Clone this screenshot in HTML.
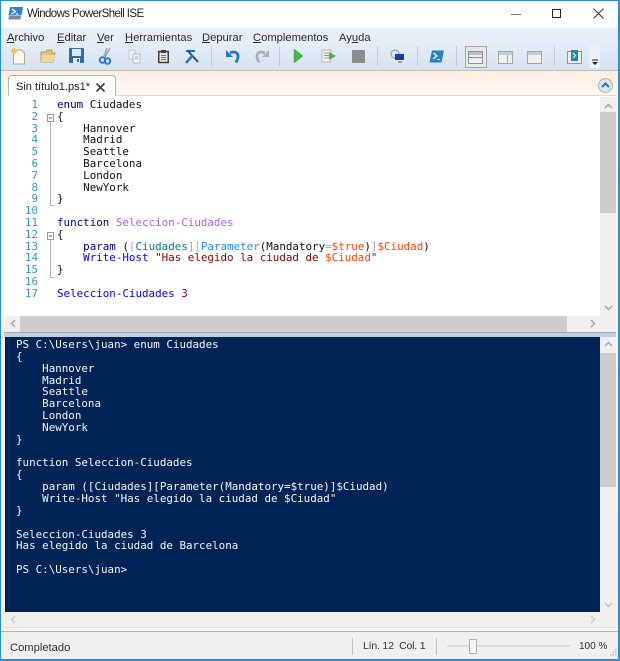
<!DOCTYPE html>
<html><head><meta charset="utf-8">
<style>
html,body{margin:0;padding:0;background:#fff}
#w{position:relative;width:620px;height:661px;overflow:hidden;background:#fff;font-family:"Liberation Sans",sans-serif;color:#222}
.a{position:absolute}
.t{position:absolute;white-space:pre;font-size:11.2px;line-height:14px;color:#2b2b2b}
.t u{text-decoration-thickness:1px;text-underline-offset:1px}
pre{margin:0;position:absolute;font-family:"DejaVu Sans Mono",monospace;font-size:10.86px;line-height:11.85px;white-space:pre}
svg{position:absolute;overflow:visible}
.ln{color:#3a96b8;text-align:right}
.k{color:#00008b}.c{color:#8a2be2;opacity:.75}.v{color:#ff4500}.s{color:#8b0000}.b{color:#0000ff}.o{color:#a9a9a9}.y{color:#008080}.p{color:#1e90ff}.n{color:#800080}
.sep{position:absolute;top:46px;width:1px;height:20px;background:#c3cdd6}
</style></head><body><div id="w">
<div class="a" style="left:0;top:28px;width:620px;height:17px;background:linear-gradient(#e9f0f8,#e5edf6)"></div>
<div class="a" style="left:0;top:45px;width:620px;height:25px;background:linear-gradient(#e4edf7,#d5e3f1)"></div>
<div class="a" style="left:0;top:70px;width:620px;height:1px;background:#c0bdb9"></div>
<div class="a" style="left:0;top:71px;width:620px;height:560px;background:linear-gradient(#fdeedf 0,#fff9f3 24px,#fdf3e8 26px,#fbf0e4 100%)"></div>
<div class="a" style="left:115px;top:95px;width:501px;height:1px;background:#dcd8d4"></div>

<!-- title -->
<svg style="left:8px;top:6px" width="16" height="15" viewBox="0 0 16 15"><path d="M2 1h13l-1.500 8.500H.5z" fill="#2f86c4"/><path d="M1 10h12l-.4 3.500H.4z" fill="#7b8d99"/><path d="M4 3l3.500 2.500L3.500 8" fill="none" stroke="#fff" stroke-width="1.200"/><path d="M7.500 8h3" stroke="#fff"/></svg>
<div class="t" style="left:27px;top:7px;font-size:11.5px;letter-spacing:-.6px;color:#222">Windows PowerShell ISE</div>
<svg style="left:511px;top:13.500px" width="10" height="2"><rect width="10" height="1" y="0" fill="#777"/></svg>
<svg style="left:551px;top:8px" width="11" height="11"><rect x="1.500" y="1.500" width="8" height="8" fill="none" stroke="#222" stroke-width="1"/></svg>
<svg style="left:593px;top:8px" width="11" height="11"><path d="M.5.500l10 10M10.500.500l-10 10" stroke="#333" stroke-width="1" fill="none"/></svg>

<!-- menu -->
<div class="t" style="left:7px;top:31px"><u>A</u>rchivo</div>
<div class="t" style="left:57px;top:31px"><u>E</u>ditar</div>
<div class="t" style="left:97px;top:31px"><u>V</u>er</div>
<div class="t" style="left:125px;top:31px"><u>H</u>erramientas</div>
<div class="t" style="left:202px;top:31px"><u>D</u>epurar</div>
<div class="t" style="left:253px;top:31px"><u>C</u>omplementos</div>
<div class="t" style="left:339px;top:31px">Ay<u>u</u>da</div>

<!-- toolbar -->
<svg style="left:10px;top:47px" width="16" height="18"><path d="M3.500 3h8l3 3v11h-11z" fill="#fbfbf6" stroke="#a9a9a0"/><circle cx="4" cy="4" r="3" fill="#f6c65a"/></svg>
<svg style="left:40px;top:49px" width="16" height="14"><path d="M1 3h5l1-2h5v3h3l-2 9H1z" fill="#e2c378" stroke="#b89a57"/><path d="M2 6h13l-2 7H1z" fill="#f0d89a"/></svg>
<svg style="left:69px;top:48px" width="15" height="16"><rect width="15" height="15" rx="1" fill="#2f6ca8"/><rect x="3" y="1" width="9" height="7" fill="#dfe8f0"/><rect x="4" y="10" width="7" height="5" fill="#e8eef4"/><rect x="8" y="11" width="2" height="3" fill="#2f6ca8"/></svg>
<svg style="left:99px;top:47px" width="12" height="18"><path d="M8 1L5 9M11 1L6 10" stroke="#9aa3ad" stroke-width="1.500" fill="none"/><circle cx="3.500" cy="13" r="2.800" fill="none" stroke="#2f75c8" stroke-width="2"/><circle cx="8.500" cy="14" r="2.800" fill="none" stroke="#2f75c8" stroke-width="2"/></svg>
<svg style="left:128px;top:49px" width="13" height="15"><path d="M1 1h6v9H1z" fill="#eef1f3" stroke="#c3c7cb"/><path d="M5 5h7v9H5z" fill="#f2f4f5" stroke="#b5b9bd"/><path d="M7 8h3M7 10h3" stroke="#aaa"/></svg>
<svg style="left:158px;top:50px" width="11" height="13"><rect x=".75" y="1.500" width="9.500" height="11" fill="#e6e6e2" stroke="#3e3e3e" stroke-width="1.500"/><rect x="3" y="0" width="5" height="3" fill="#3e3e3e"/><path d="M3 5.500h5M3 7.500h5M3 9.500h5" stroke="#777"/></svg>
<svg style="left:185px;top:50px" width="14" height="13"><path d="M1 1h9" stroke="#1d6fb5" stroke-width="2"/><path d="M3 1l10 11" stroke="#34495e" stroke-width="2" fill="none"/><path d="M8 5L1 13" stroke="#1d7fc9" stroke-width="2.500" fill="none"/></svg>
<div class="sep" style="left:211px"></div>
<svg style="left:225px;top:49px" width="15" height="15"><path d="M5 4C10 1.500 13.500 4 13 8c-.2 2-1 3.500-2 5.500" fill="none" stroke="#1f7bc4" stroke-width="2.800"/><path d="M1 1v7h7z" fill="#1f7bc4"/></svg>
<svg style="left:255px;top:49px" width="15" height="15"><path d="M10 4C5 1.500 1.500 4 2 8c.2 2 1 3.500 2 5.500" fill="none" stroke="#aab0b4" stroke-width="2.800"/><path d="M14 1v7H7z" fill="#aab0b4"/></svg>
<div class="sep" style="left:279px"></div>
<svg style="left:294px;top:49px" width="10" height="14"><path d="M0 0l9 7-9 7z" fill="#44b944" stroke="#3aa33a" stroke-width=".5"/></svg>
<svg style="left:321px;top:49px" width="15" height="14"><path d="M1 1h9v12H1z" fill="#f3f3ee" stroke="#b5b5ad"/><path d="M3 4h5M3 6.500h5M3 9h5" stroke="#999"/><path d="M8 3l7 4-7 4z" fill="#44b944"/></svg>
<svg style="left:352px;top:50px" width="13" height="13"><rect width="13" height="13" rx="1" fill="#8c8c8c"/></svg>
<div class="sep" style="left:377px"></div>
<svg style="left:390px;top:49px" width="15" height="15"><circle cx="5" cy="5" r="4" fill="#dfe7ec" stroke="#7f97a8"/><rect x="5" y="5" width="9" height="6" fill="#1a3ba8"/><path d="M8 13h4" stroke="#7d8b95" stroke-width="1.500"/></svg>
<div class="sep" style="left:417px"></div>
<svg style="left:429px;top:50px" width="15" height="13"><path d="M3 .5h12l-2.500 12H.5z" fill="#2a7fc0"/><path d="M4.500 3l3.500 3-4 3" fill="none" stroke="#fff" stroke-width="1.200"/><path d="M8 9.500h3" stroke="#fff"/></svg>
<div class="sep" style="left:456px"></div>
<div class="a" style="left:465px;top:46px;width:20px;height:20px;border:1px solid #a4a4a4;background:#e6e8ea"></div>
<svg style="left:468px;top:51px" width="16" height="14"><rect x=".5" y=".5" width="14" height="12" fill="#f0f0ec" stroke="#8a8f92"/><rect x="1" y="1" width="13" height="3" fill="#b9c0c6"/><path d="M1 6.500h13" stroke="#8a8f92"/></svg>
<svg style="left:497.500px;top:51px" width="16" height="14"><rect x=".5" y=".5" width="14" height="12" fill="#f0f0ec" stroke="#a2a7aa"/><rect x="1" y="1" width="13" height="3" fill="#c5cbd0"/><path d="M9.500 4v9" stroke="#a2a7aa"/></svg>
<svg style="left:527px;top:51px" width="16" height="14"><rect x=".5" y=".5" width="14" height="12" fill="#f0f0ec" stroke="#a2a7aa"/><rect x="1" y="1" width="13" height="3" fill="#c5cbd0"/></svg>
<div class="sep" style="left:554px"></div>
<svg style="left:566.500px;top:49px" width="15" height="15"><rect x=".5" y="2.500" width="14" height="12" fill="#eceef0" stroke="#8d9499"/><rect x="4" y="1" width="7" height="11" fill="#2a7fc0"/><path d="M6 4l2.500 2.500L6 9" fill="none" stroke="#fff"/></svg>
<div class="a" style="left:589px;top:45px;width:11px;height:23px;background:#eaf1f8"></div>
<svg style="left:592px;top:60px" width="6" height="6"><path d="M0 0h6" stroke="#222"/><path d="M0 2h6L3 5z" fill="#222"/></svg>

<!-- tab -->
<div class="a" style="left:8px;top:75px;width:106px;height:21px;border:1px solid #b5b5b5;border-bottom:none;border-radius:4px 4px 0 0;background:linear-gradient(#fdfdfd,#fff)"></div>
<div class="t" style="left:16px;top:80px;font-size:11px;color:#222">Sin título1.ps1*</div>
<svg style="left:96px;top:83px" width="9" height="9"><path d="M.5.500l8 8M8.500.500l-8 8" stroke="#444" stroke-width="1.800"/></svg>
<svg style="left:598px;top:78px" width="15" height="15"><circle cx="7.500" cy="7.500" r="7" fill="#dfe4ea" stroke="#b3b3b3"/><path d="M4 9l3.500-3.500L11 9" fill="none" stroke="#2a6fc0" stroke-width="2"/></svg>

<!-- editor -->
<div class="a" style="left:4px;top:96px;width:612px;height:236px;background:#fff"></div>
<div class="a" style="left:600px;top:97px;width:16px;height:219px;background:#f0f0f0"></div>
<div class="a" style="left:600px;top:112px;width:16px;height:101px;background:#cdcdcd"></div>
<svg style="left:604px;top:103px" width="9" height="6"><path d="M1 5l3.500-3.500L8 5" fill="none" stroke="#a6a6a6" stroke-width="1.500"/></svg>
<svg style="left:604px;top:305px" width="9" height="6"><path d="M1 1l3.500 3.500L8 1" fill="none" stroke="#a6a6a6" stroke-width="1.500"/></svg>
<div class="a" style="left:4px;top:316px;width:612px;height:16px;background:#f0f0f0"></div>
<div class="a" style="left:20px;top:316px;width:547px;height:16px;background:#cdcdcd"></div>
<svg style="left:10px;top:319px" width="6" height="9"><path d="M5 1L1.500 4.500 5 8" fill="none" stroke="#a6a6a6" stroke-width="1.500"/></svg>
<svg style="left:590px;top:319px" width="6" height="9"><path d="M1 1l3.500 3.500L1 8" fill="none" stroke="#a6a6a6" stroke-width="1.500"/></svg>

<pre class="ln" style="left:11px;top:99px;width:27px;line-height:11.8px">1
2
3
4
5
6
7
8
9
10
11
12
13
14
15
16
17</pre>
<!-- folding -->
<svg style="left:46px;top:114px" width="14" height="170"><rect x="1.500" y=".5" width="6" height="7" fill="#fff" stroke="#999"/><path d="M3 4h3" stroke="#555"/><path d="M4.500 8v83.500h4M4.500 126v37.500h4" fill="none" stroke="#b5b5b5"/><rect x="1.500" y="118.500" width="6" height="7" fill="#fff" stroke="#999"/><path d="M3 122h3" stroke="#555"/></svg>
<pre style="left:57px;top:99px;color:#111;line-height:11.8px"><span class="k">enum</span> <span style="color:#111">Ciudades</span>
{
    Hannover
    Madrid
    Seattle
    Barcelona
    London
    NewYork
}

<span class="k">function</span> <span class="c">Seleccion-Ciudades</span>
{
    <span class="k">param</span> <span>(</span><span class="o">[</span><span class="y">Ciudades</span><span class="o">][</span><span class="p">Parameter</span><span>(Mandatory</span><span class="o">=</span><span class="v">$true</span><span>)</span><span class="o">]</span><span class="v">$Ciudad</span><span>)</span>
    <span class="b">Write-Host</span> <span class="s">"Has elegido la ciudad de </span><span class="v">$Ciudad</span><span class="s">"</span>
}

<span class="b">Seleccion-Ciudades</span> <span class="n">3</span></pre>

<!-- splitter -->
<div class="a" style="left:4px;top:332px;width:612px;height:1px;background:#a9a9a9"></div>
<div class="a" style="left:4px;top:333px;width:612px;height:4px;background:#b9d2ec"></div>

<!-- console -->
<div class="a" style="left:5px;top:337px;width:595px;height:275px;background:#012456"></div>
<div class="a" style="left:600px;top:337px;width:16px;height:275px;background:#f0f0f0"></div>
<div class="a" style="left:600px;top:353px;width:16px;height:134px;background:#cdcdcd"></div>
<svg style="left:604px;top:341px" width="9" height="6"><path d="M1 5l3.500-3.500L8 5" fill="none" stroke="#a6a6a6" stroke-width="1.500"/></svg>
<svg style="left:604px;top:602px" width="9" height="6"><path d="M1 1l3.500 3.500L8 1" fill="none" stroke="#c0c0c0" stroke-width="1.500"/></svg>
<div class="a" style="left:4px;top:612px;width:612px;height:15px;background:#f0f0f0;border-bottom:1px solid #e2e0dd"></div>
<svg style="left:10px;top:615px" width="6" height="9"><path d="M5 1L1.500 4.500 5 8" fill="none" stroke="#d0d0d0" stroke-width="1.500"/></svg>
<svg style="left:590px;top:615px" width="6" height="9"><path d="M1 1l3.500 3.500L1 8" fill="none" stroke="#d0d0d0" stroke-width="1.500"/></svg>
<pre style="left:16px;top:339px;color:#f5f5f5">PS C:\Users\juan&gt; enum Ciudades
{
    Hannover
    Madrid
    Seattle
    Barcelona
    London
    NewYork
}

function Seleccion-Ciudades
{
    param ([Ciudades][Parameter(Mandatory=$true)]$Ciudad)
    Write-Host "Has elegido la ciudad de $Ciudad"
}

Seleccion-Ciudades 3
Has elegido la ciudad de Barcelona

PS C:\Users\juan&gt;</pre>

<!-- status -->
<div class="a" style="left:0;top:631px;width:620px;height:1px;background:#b4b4b4"></div>
<div class="a" style="left:0;top:632px;width:620px;height:28px;background:#f0f0f0"></div>
<div class="t" style="left:10px;top:641px;color:#333">Completado</div>
<div class="a" style="left:352px;top:638px;width:1px;height:17px;background:#c0c0c0"></div>
<div class="t" style="left:363px;top:639px;font-size:10.5px;letter-spacing:-.2px;color:#333">Lín. 12&#160;&#160;Col. 1</div>
<div class="a" style="left:436px;top:638px;width:1px;height:17px;background:#c0c0c0"></div>
<div class="a" style="left:447px;top:645px;width:123px;height:2px;background:#dcdcdc"></div>
<div class="a" style="left:469px;top:639px;width:6px;height:13px;background:#f4f4f4;border:1px solid #b0b0b0"></div>
<div class="t" style="left:579px;top:640px;font-size:10px;color:#333">100 %</div>
<svg style="left:608px;top:648px" width="10" height="10"><g fill="#bdbdbd"><rect x="7" y="1" width="1.500" height="1.500"/><rect x="4.500" y="3.500" width="1.500" height="1.500"/><rect x="7" y="3.500" width="1.500" height="1.500"/><rect x="2" y="6" width="1.500" height="1.500"/><rect x="4.500" y="6" width="1.500" height="1.500"/><rect x="7" y="6" width="1.500" height="1.500"/></g></svg>

<!-- window border -->
<div class="a" style="left:0;top:0;width:620px;height:1px;background:#2b8fd8"></div>
<div class="a" style="left:0;top:659px;width:620px;height:2px;background:#2b8fd8"></div>
<div class="a" style="left:0;top:0;width:1px;height:661px;background:#2b8fd8"></div>
<div class="a" style="left:618px;top:0;width:2px;height:661px;background:#2b8fd8"></div>
</div></body></html>
